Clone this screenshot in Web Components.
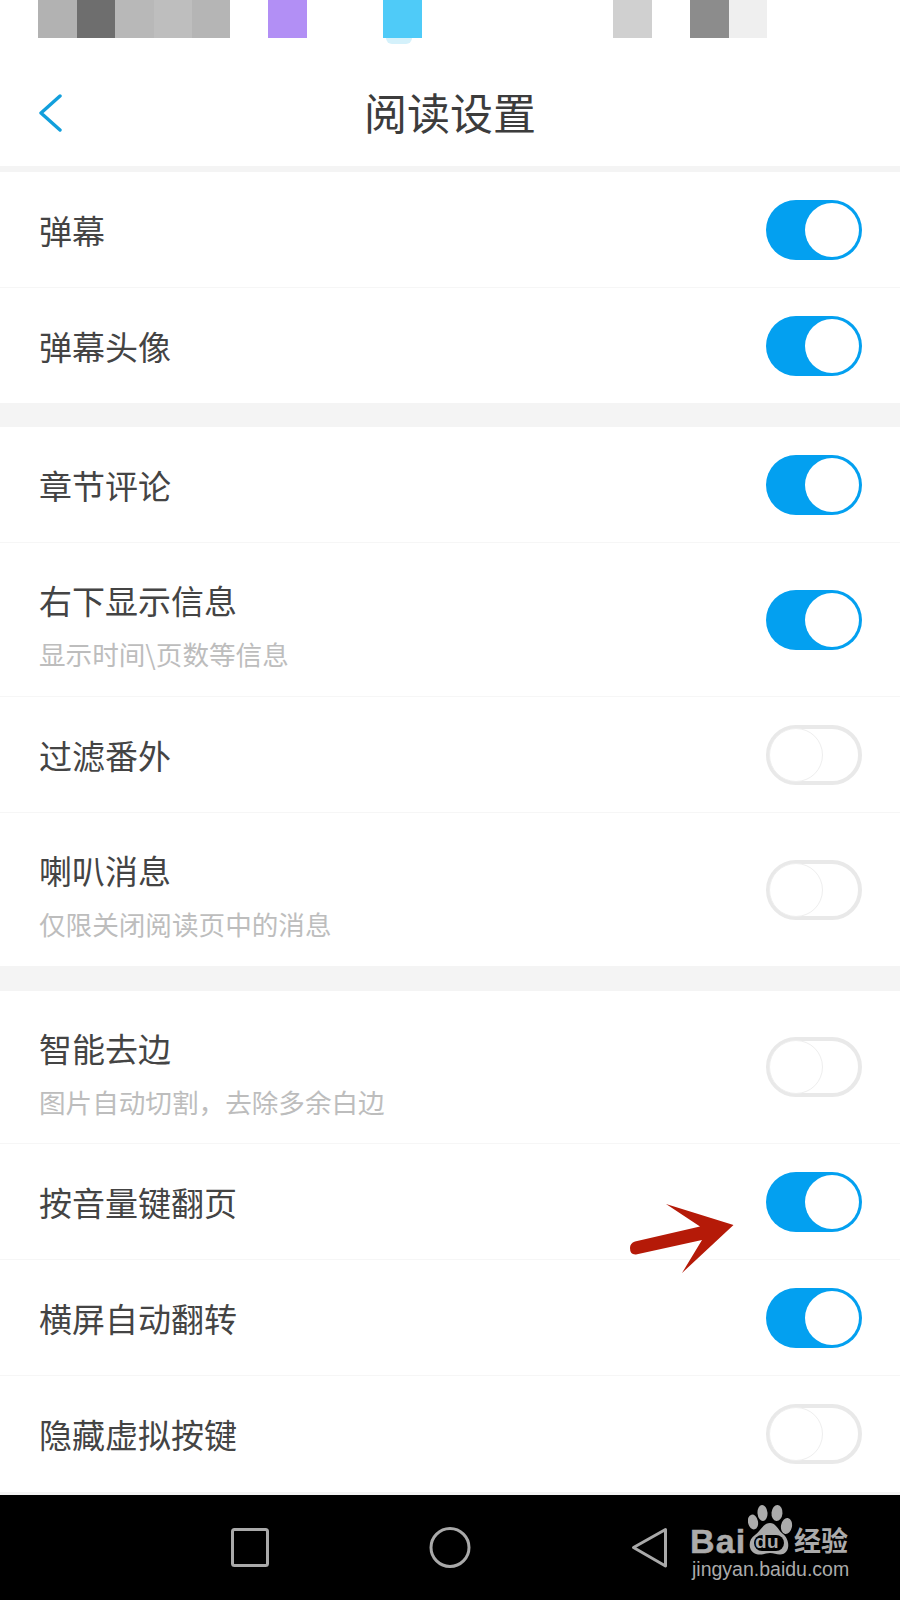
<!DOCTYPE html>
<html lang="zh">
<head>
<meta charset="utf-8">
<title>阅读设置</title>
<style>
html,body{margin:0;padding:0;background:#fff}
body{width:900px;height:1600px;overflow:hidden;font-family:"Noto Sans CJK SC","Liberation Sans",sans-serif;position:relative}
</style>
</head>
<body>
<app-page>
  <top-strip></top-strip>
  <nav-header>阅读设置</nav-header>
  <gap-bar h="6"></gap-bar>
  <setting-row h="116" on>弹幕</setting-row>
  <setting-row h="115" on last>弹幕头像</setting-row>
  <gap-bar h="24"></gap-bar>
  <setting-row h="116" on>章节评论</setting-row>
  <setting-row h="154" on sub="显示时间\页数等信息">右下显示信息</setting-row>
  <setting-row h="116">过滤番外</setting-row>
  <setting-row h="153" sub="仅限关闭阅读页中的消息" last>喇叭消息</setting-row>
  <gap-bar h="25"></gap-bar>
  <setting-row h="153" sub="图片自动切割，去除多余白边">智能去边</setting-row>
  <setting-row h="116" on>按音量键翻页</setting-row>
  <setting-row h="116" on>横屏自动翻转</setting-row>
  <setting-row h="116" last>隐藏虚拟按键</setting-row>
  <gap-bar h="3"></gap-bar>
  <system-nav></system-nav>
  <red-arrow></red-arrow>
</app-page>
<script>
class AppPage extends HTMLElement{
  constructor(){super();this.attachShadow({mode:'open'}).innerHTML=`<style>:host{display:flex;flex-direction:column;width:900px;height:1600px;position:relative;background:#fff;color:#444}</style><slot></slot>`;}
}
class TopStrip extends HTMLElement{
  constructor(){super();
    const blocks=[['#b2b2b2',39],['#6e6e6e',38],['#b8b8b8',39],['#bebebe',38],['#b5b5b5',38],['transparent',38],['#b28ff5',39],['transparent',76],['#4fcbf8',39],['transparent',191],['#d0d0d0',39],['transparent',38],['#8c8c8c',39],['#efefef',38]];
    this.attachShadow({mode:'open'}).innerHTML=`<style>:host{display:flex;height:44px;padding-left:38px;box-sizing:border-box;align-items:flex-start;position:relative}
    i{display:block;height:38px}
    b{position:absolute;left:386px;top:38px;width:26px;height:6px;border-radius:0 0 13px 13px;background:#d4f1fb}</style>`+blocks.map(b=>`<i style="width:${b[1]}px;background:${b[0]}"></i>`).join('')+`<b></b>`;}
}
class NavHeader extends HTMLElement{
  constructor(){super();this.attachShadow({mode:'open'}).innerHTML=`<style>:host{display:grid;grid-template-columns:1fr auto 1fr;height:122px;box-sizing:border-box;padding:0 38px;font-size:43px;color:#3c3c3c}
    svg{margin-top:50px;display:block}
    span{margin-top:35px;line-height:64px}</style>
    <svg width="24" height="38" viewBox="0 0 24 38"><path d="M22 2 L3 19 L22 36" fill="none" stroke="#129fdc" stroke-width="3.4" stroke-linecap="round" stroke-linejoin="round"/></svg><span><slot></slot></span><i></i>`;}
}
class GapBar extends HTMLElement{
  constructor(){super();this.attachShadow({mode:'open'}).innerHTML=`<style>:host{display:block;background:#f4f4f4;flex:none}</style>`;}
  connectedCallback(){this.style.height=this.getAttribute('h')+'px';}
}
class SettingRow extends HTMLElement{
  constructor(){super();this.attachShadow({mode:'open'}).innerHTML=`<style>
    :host{display:flex;align-items:center;justify-content:space-between;box-sizing:border-box;padding:0 38px 0 39px;flex:none;border-bottom:1px solid #f6f6f6}
    :host([last]){border-bottom:none}
    :host([sub]) .t{padding-top:11px}
    .l{font-size:33px;line-height:44px;color:#444}
    .s{font-size:26.6px;line-height:36px;color:#bdbdbd;margin-top:14px;white-space:nowrap}
    .s:empty{display:none}
    </style><div class="t"><div class="l"><slot></slot></div><div class="s"></div></div><toggle-switch></toggle-switch>`;}
  connectedCallback(){
    this.style.height=this.getAttribute('h')+'px';
    this.shadowRoot.querySelector('.s').textContent=this.getAttribute('sub')||'';
    if(this.hasAttribute('on'))this.shadowRoot.querySelector('toggle-switch').setAttribute('on','');
  }
}
class ToggleSwitch extends HTMLElement{
  constructor(){super();this.attachShadow({mode:'open'}).innerHTML=`<style>
    :host{display:block;width:96px;height:60px;box-sizing:border-box;border-radius:30px;border:4px solid #e9e9e9;background:#fff;position:relative;flex:none}
    i{position:absolute;left:-1px;top:-1px;width:52px;height:52px;border-radius:50%;border:1px solid #eee;background:#fff;box-sizing:content-box}
    :host([on]){background:#03a0f0;border:none}
    :host([on]) i{left:38.5px;top:3px;border:none;width:54px;height:54px}
    </style><i></i>`;}
}
class SystemNav extends HTMLElement{
  constructor(){super();this.attachShadow({mode:'open'}).innerHTML=`<style>
    :host{display:block;flex:none;height:105px;background:#000;position:relative;margin-top:auto}
    svg.n{position:absolute;left:0;top:0}
    .logo{position:absolute;left:690px;top:8px;width:170px;height:90px;color:#ababab}
    .bai{position:absolute;left:0;top:18px;font:bold 34px/40px "Liberation Sans",sans-serif;letter-spacing:1.2px;-webkit-text-stroke:.5px #ababab}
    .jy{position:absolute;left:2px;top:53.5px;font:19.5px/24px "Liberation Sans",sans-serif;white-space:nowrap}
    .cn{position:absolute;left:104px;top:20px;font:700 27px/34px "Noto Sans CJK SC",sans-serif;white-space:nowrap}
    .du{position:absolute;left:65px;top:29px;font:bold 19px/20px "Liberation Sans",sans-serif;letter-spacing:.5px}
    svg.p{position:absolute;left:58px;top:1px}
    </style>
    <svg class="n" width="900" height="105" viewBox="0 1495 900 105" fill="none" stroke="#a9a9a9" stroke-width="3" stroke-linejoin="round">
      <rect x="232.5" y="1529.5" width="35" height="36" rx="2"/>
      <circle cx="450" cy="1547.5" r="19"/>
      <path d="M665.5 1529.5 L633.5 1547.5 L665.5 1566 Z"/>
    </svg>
    <div class="logo">
      <div class="bai">Bai</div>
      <svg class="p" width="46" height="54" viewBox="0 0 46 54" fill="#ababab">
        <ellipse cx="5" cy="18" rx="5" ry="7.5" transform="rotate(-12 5 18)"/>
        <ellipse cx="14.5" cy="9" rx="5" ry="8" transform="rotate(-5 14.5 9)"/>
        <ellipse cx="29" cy="9" rx="5.5" ry="8" transform="rotate(5 29 9)"/>
        <ellipse cx="38.5" cy="22" rx="5.5" ry="8" transform="rotate(10 38.5 22)"/>
        <path d="M22 19 C28 19 30 26 35 30 C42 35 43 50 32 50.5 C28 50.5 26 49 22 49 C18 49 15 51 10 50.5 C0 49 -1 36 7 31 C12 28 15 19 22 19Z"/>
        <rect x="6" y="31" width="30" height="16" rx="8" fill="#000"/>
      </svg>
      <div class="du">du</div>
      <div class="cn">经验</div>
      <div class="jy">jingyan.baidu.com</div>
    </div>`;}
}
class RedArrow extends HTMLElement{
  constructor(){super();this.attachShadow({mode:'open'}).innerHTML=`<style>:host{position:absolute;left:620px;top:1195px;width:125px;height:85px;display:block}</style>
    <svg width="125" height="85" viewBox="620 1195 125 85"><path d="M666 1204 L733.5 1225 L682 1273 L702 1240 L636 1254.5 Q630 1255 630 1248 Q630 1243 635 1241.5 L700 1226.5 Z" fill="#b51a08"/></svg>`;}
}
customElements.define('app-page',AppPage);
customElements.define('top-strip',TopStrip);
customElements.define('nav-header',NavHeader);
customElements.define('gap-bar',GapBar);
customElements.define('toggle-switch',ToggleSwitch);
customElements.define('setting-row',SettingRow);
customElements.define('system-nav',SystemNav);
customElements.define('red-arrow',RedArrow);
</script>
</body>
</html>
